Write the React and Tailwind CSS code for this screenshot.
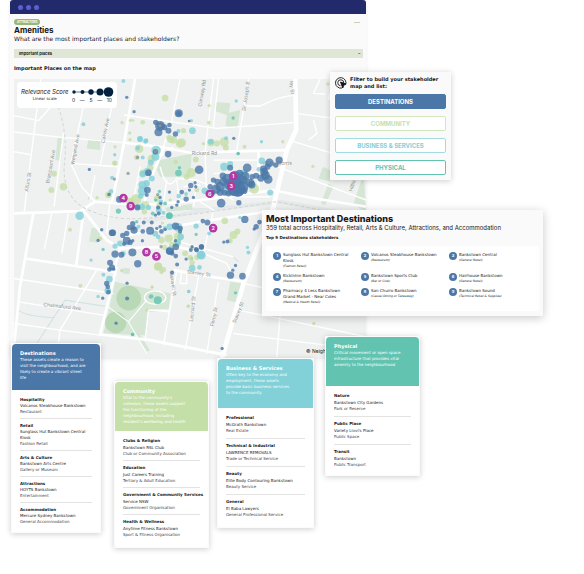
import React from 'react';

const BLUE = '#4a77a8';
const GREEN = '#c5dfa8';
const AQUA = '#82d0d8';
const TEAL = '#62c3b1';
const GREY = '#8d9399';

// Each group is a list of [x, y, radius] in map units, offset by (dx, dy).
const dotGroups = [
  { dx: 0, dy: 0, color: GREEN, dots: [[495, 294, 10], [391, 361, 5], [399, 361, 4], [428, 367, 7], [366, 368, 5], [389, 399, 5], [390, 419, 5], [344, 489, 8], [162, 521, 9], [190, 560, 11], [154, 570, 9], [550, 392, 8], [512, 418, 11], [540, 430, 13], [627, 317, 5], [626, 368, 6], [610, 431, 5], [733, 440, 6], [848, 425, 5], [983, 252, 5], [938, 499, 5]] },
  { dx: 0, dy: 0, color: AQUA, dots: [[370, 243, 6], [250, 373, 6], [344, 464, 5], [336, 533, 6], [708, 303, 5], [784, 425, 5], [535, 393, 6], [577, 392, 10], [574, 362, 5], [420, 417, 8], [436, 424, 7]] },
  { dx: 0, dy: 0, color: BLUE, dots: [[380, 292, 5], [402, 335, 5], [268, 508, 5], [701, 415, 5], [326, 584, 6], [567, 363, 4]] },
  { dx: 0, dy: 0, color: TEAL, dots: [[699, 354, 5], [714, 461, 5]] },
  { dx: 0, dy: 540, color: GREEN, dots: [[210, 149, 6], [300, 176, 7], [241, 317, 6], [325, 44, 10], [291, 53, 5], [365, 271, 5], [440, 390, 5], [456, 321, 5], [474, 259, 12], [484, 275, 7], [565, 378, 5]] },
  { dx: 0, dy: 540, color: AQUA, dots: [[239, 107, 13], [333, 34, 7], [273, 240, 5], [310, 284, 6], [328, 297, 10], [294, 349, 5], [323, 332, 10], [566, 334, 5]] },
  { dx: 0, dy: 540, color: BLUE, dots: [[305, 149, 5], [336, 158, 10], [294, 181, 5], [327, 43, 5], [330, 248, 9], [336, 262, 9], [328, 268, 7], [341, 267, 5], [320, 310, 8], [323, 320, 7], [325, 336, 7], [308, 354, 5], [413, 251, 11], [381, 309, 5], [381, 355, 6], [348, 429, 5], [516, 277, 6], [531, 253, 6]] },
  { dx: 0, dy: 540, color: TEAL, dots: [[355, 93, 8], [309, 208, 5], [453, 349, 7], [473, 360, 12], [397, 463, 5], [508, 107, 10]] },
  { dx: 390, dy: 510, color: GREEN, dots: [[284, 152, 10], [322, 184, 9], [310, 195, 12], [300, 212, 8], [84, 289, 12], [100, 298, 8], [165, 250, 9], [184, 235, 7], [200, 262, 8], [186, 278, 8], [174, 408, 5], [66, 350, 4], [551, 460, 5]] },
  { dx: 390, dy: 510, color: AQUA, dots: [[214, 255, 13], [186, 294, 10], [208, 292, 7], [329, 142, 5], [355, 247, 6], [352, 232, 5], [176, 364, 5], [198, 168, 8], [237, 190, 6]] },
  { dx: 390, dy: 510, color: BLUE, dots: [[273, 99, 13], [326, 98, 8], [344, 148, 11], [388, 156, 7], [378, 170, 8], [372, 177, 5], [281, 216, 5], [292, 214, 6], [214, 231, 8], [200, 240, 7], [186, 230, 5], [301, 315, 11], [337, 318, 10], [316, 286, 5], [308, 300, 5], [276, 535, 5], [120, 242, 12], [137, 258, 7], [218, 153, 7], [232, 157, 9]] },
  { dx: 390, dy: 510, color: TEAL, dots: [[118, 136, 9], [316, 368, 5], [184, 265, 5], [8, 493, 5]] },
  { dx: 330, dy: 270, color: GREEN, dots: [[87, 176, 13], [125, 206, 12], [80, 202, 8], [98, 248, 10], [120, 233, 10], [78, 328, 16], [60, 335, 12], [105, 345, 12], [103, 365, 8], [257, 208, 9], [243, 248, 14], [230, 260, 9], [197, 216, 7], [190, 150, 11], [176, 142, 8], [215, 158, 13], [302, 158, 11], [320, 160, 9], [342, 156, 14], [347, 172, 9], [140, 325, 9], [148, 345, 9], [176, 445, 12], [154, 450, 10], [205, 440, 14], [200, 460, 11], [186, 465, 9], [164, 472, 8], [15, 170, 5], [14, 219, 6], [260, 300, 7], [432, 296, 15], [420, 280, 10], [240, 503, 8], [180, 330, 5], [157, 399, 5]] },
  { dx: 330, dy: 270, color: AQUA, dots: [[90, 147, 9], [83, 174, 7], [108, 152, 7], [138, 181, 14], [136, 200, 12], [122, 217, 9], [98, 202, 6], [98, 252, 10], [112, 246, 12], [125, 265, 9], [110, 280, 10], [97, 285, 12], [97, 303, 14], [92, 318, 8], [83, 350, 8], [95, 350, 10], [115, 352, 8], [152, 335, 7], [146, 360, 9], [160, 368, 6], [206, 318, 7], [228, 312, 6], [284, 302, 10], [348, 145, 6], [302, 155, 9], [342, 230, 12], [360, 222, 9], [400, 250, 12], [391, 293, 18], [350, 300, 14], [455, 212, 10], [480, 307, 9], [446, 238, 7], [204, 412, 13], [212, 440, 10], [179, 410, 10], [165, 415, 7], [135, 430, 9], [85, 410, 6], [30, 460, 9], [15, 468, 8], [40, 490, 7], [204, 456, 9], [272, 495, 12], [180, 475, 7], [144, 440, 7]] },
  { dx: 330, dy: 270, color: BLUE, dots: [[206, 70, 12], [206, 71, 8], [137, 97, 8], [150, 108, 15], [150, 107, 9], [145, 127, 12], [175, 122, 9], [196, 132, 8], [178, 105, 7], [163, 112, 9], [136, 185, 8], [174, 192, 10], [267, 239, 13], [115, 248, 10], [112, 300, 10], [110, 315, 6], [28, 328, 10], [82, 352, 9], [152, 340, 5], [144, 352, 6], [146, 370, 6], [150, 322, 5], [178, 306, 5], [215, 306, 7], [204, 335, 5], [228, 327, 8], [242, 286, 8], [257, 290, 5], [250, 322, 5], [238, 300, 5], [255, 278, 5], [185, 352, 5], [200, 345, 5], [196, 408, 11], [210, 415, 8], [210, 425, 6], [68, 401, 8], [58, 412, 8], [72, 420, 11], [70, 414, 7], [101, 397, 6], [120, 422, 12], [98, 424, 7], [50, 430, 8], [38, 436, 8], [50, 452, 12], [60, 457, 8], [42, 462, 6], [8, 428, 10], [15, 492, 11], [34, 494, 9], [67, 487, 12], [68, 452, 5], [97, 452, 5], [154, 424, 7], [165, 418, 5], [150, 410, 5], [140, 415, 5], [178, 483, 11], [197, 470, 10], [186, 490, 7], [242, 480, 6], [258, 478, 7], [274, 470, 8], [228, 507, 5], [196, 452, 5], [125, 397, 6], [136, 375, 5]] },
  { dx: 330, dy: 270, color: BLUE, dots: [[310, 270, 8], [318, 297, 14], [306, 308, 9], [330, 290, 14], [340, 275, 13], [338, 257, 10], [330, 307, 10], [352, 266, 15], [360, 283, 18], [374, 276, 20], [380, 295, 25], [395, 290, 20], [385, 303, 17], [370, 300, 18], [400, 270, 12], [388, 250, 11], [411, 233, 13], [360, 233, 9], [404, 258, 14], [420, 278, 13], [425, 284, 11], [438, 257, 9], [452, 264, 11], [466, 256, 13], [474, 268, 13], [460, 236, 10], [478, 218, 13], [472, 230, 9], [497, 225, 8], [507, 210, 11], [462, 246, 12], [375, 258, 16], [402, 302, 10], [355, 310, 9], [343, 308, 9], [380, 270, 14], [426, 260, 8], [300, 290, 8], [322, 275, 9]] },
  { dx: 330, dy: 270, color: TEAL, dots: [[205, 249, 10], [148, 304, 5], [208, 233, 5], [384, 190, 5], [165, 340, 6], [137, 330, 5], [177, 377, 9], [128, 370, 6], [258, 433, 5], [80, 395, 5]] },
  { dx: 330, dy: 270, color: GREY, dots: [[82, 202, 5], [54, 250, 5], [13, 267, 5], [136, 184, 6], [150, 107, 5], [143, 314, 5], [153, 470, 5]] },
];

const pins = [[699, 528, 1], [639, 684, 2], [693, 558, 3], [370, 594, 4], [469, 769, 5], [629, 581, 6], [439, 756, 8], [392, 618, 9]];

const minorRoads = [
  'M42 347L115 362L160 312M42 396L185 412L372 428M42 455L92 464M122 237L72 640M190 400L162 620M250 320L212 490L355 500M335 320L300 500',
  'M372 345L650 385L880 368M540 237L515 360L490 440M640 237L615 455L620 600M745 237L710 450M655 237L640 380M730 318L780 318Q840 288 880 286',
  'M888 340L1098 368M880 425L1098 490M830 500L1098 600M960 237L940 280L975 282M1000 237L985 300M940 360L950 400L925 420',
  'M100 640L75 775M155 640L133 748M205 640L185 760M42 835L340 880M55 905L310 945M42 970L180 990L300 1005M290 810L180 990L170 1071',
  'M285 605L245 560L212 490M285 525L270 600M530 810L490 1035M595 830L555 1050M655 845L620 1060M520 720L700 770M600 605L640 630L610 760L680 790L700 830',
  'M730 850L1098 930M715 930L1098 1010M700 1000L1098 1050M840 940L830 1071M440 930L510 930M435 1020L445 930L510 935M545 810L540 850L560 850L560 815',
  'M480 500Q500 580 530 535L590 540Q640 560 700 600M500 540L490 610M530 540L540 620M590 540L580 620M420 500L400 600M330 600L320 700M480 470L520 440M550 560L600 555M640 480L820 480M640 520L800 515M650 590L810 590',
];

const streets = [
  [84, 575, -80, 'Allum St'], [148, 550, -80, 'Brancourt Ave'], [222, 495, -80, 'Weigand Ave'], [313, 430, -78, 'Cairds Ave'],
  [604, 320, -80, 'Conway Rd'], [736, 334, -82, 'Sir Joseph B'], [868, 244, 84, 'ley St'], [575, 464, 0, 'Rickard Rd'],
  [786, 496, 0, 'Vicky Morris'], [130, 918, 6, 'Chelmsford Ave'], [508, 812, 82, 'Maxwell St'], [560, 820, 8, 'Stanley St'],
  [578, 965, -84, 'Leonard St'], [640, 980, -78, 'Percy St'], [706, 970, -68, 'Stacey St'], [1056, 575, -72, 'Hillier St'],
];

function AmenityMap() {
  return (
    <svg viewBox="42 237 1056 840" preserveAspectRatio="xMidYMin slice" className="block h-[280px] w-full" role="img" aria-label="Map of important places">
      <rect x="0" y="200" width="1200" height="900" fill="#eff1f1" />
      <g fill="#d5e6d5">
        <path d="M173 413L187 415L183 483L166 480Z" />
        <path d="M265 417L301 420L300 450L260 445Z" />
        <path d="M648 306L691 310L686 338L720 330L712 384L676 378L680 345L645 333Z" />
        <path d="M480 480L575 460L570 530L480 530L470 510Z" />
        <path d="M345 845L512 880L505 935L445 935L435 1005L310 1000Z" />
        <path d="M275 683L305 688L293 728L267 724Z" />
        <path d="M370 803L390 805L388 822L368 820Z" />
        <path d="M690 845L730 850L722 910L680 900Z" />
        <path d="M968 500L1000 515L990 545L955 535Z" />
        <path d="M1090 520L1060 610L1098 640Z" />
        <path d="M985 550L962 610L975 615L1000 560Z" />
        <path d="M268 585L262 600L274 600Z" />
        <path d="M495 623L575 612L578 628L500 635Z" />
        <path d="M385 965L440 1055L450 1050L395 965Z" />
      </g>
      <g fill="#b9d9b6">
        <circle cx="386" cy="894" r="37" />
        <circle cx="347" cy="967" r="32" />
      </g>
      <g fill="none" stroke="#cfe2e2" strokeWidth="3">
        <path d="M55 930Q80 950 160 952M110 1030L195 900L315 918M560 628L700 622M700 770L715 785" />
      </g>
      <g fill="none" stroke="#e6e9e9" strokeWidth="12">
        <path d="M430 665L620 630L840 605L1098 650" />
      </g>
      <g fill="none" stroke="#fff" strokeWidth="4" strokeLinejoin="round">
        {minorRoads.map((d) => <path key={d} d={d} />)}
        <ellipse cx="465" cy="892" rx="32" ry="20" />
        <path d="M325 920L385 965L440 1060M385 965L440 900" strokeWidth="3" />
      </g>
      <g fill="none" stroke="#fff" strokeWidth="8" strokeLinejoin="round">
        <path d="M405 237L372 428L335 612" />
        <path d="M372 428L480 440L570 458L860 450" />
        <path d="M42 640L240 633L285 605L430 615L600 600L820 570" />
        <path d="M250 630L320 720L360 745L530 740L600 755" />
        <path d="M100 640L75 775L60 860L42 1040M75 775L340 815L360 745M250 640L228 800" />
        <path d="M350 800L300 1003L450 1020L680 1065" />
        <path d="M490 445L450 540L430 620" />
        <path d="M520 810L600 825L735 845M775 450L775 580" />
        <path d="M360 710L600 665L830 630" />
        <path d="M820 570Q900 590 1098 620" />
      </g>
      <path d="M885 237L888 390L860 450L820 620L730 850L665 1075" fill="none" stroke="#fff" strokeWidth="14" strokeLinejoin="round" />
      <path d="M175 320Q205 410 192 500Q190 590 255 625Q330 662 430 655L600 640L830 605L1098 655" fill="none" stroke="#d3d6d6" strokeWidth="3" strokeDasharray="10 7" />
      <g fill="#8f9494" fontFamily="Inter, sans-serif" fontSize="15">
        {streets.map(([x, y, a, t]) => (
          <text key={t} x={x} y={y} transform={`rotate(${a} ${x} ${y})`}>{t}</text>
        ))}
      </g>
      {dotGroups.map((g, i) => (
        <g key={i} fill={g.color} fillOpacity="0.8" transform={`translate(${g.dx} ${g.dy})`}>
          {g.dots.map(([x, y, r], k) => <circle key={k} cx={x} cy={y} r={r} />)}
        </g>
      ))}
      <g fontFamily="Inter, sans-serif" fontSize="16" fontWeight="600" textAnchor="middle">
        {pins.map(([x, y, n], i) => (
          <g key={i}>
            <circle cx={x} cy={y} r="13" fill="#b239a5" />
            <text x={x} y={y + 6} fill="#fff">{n}</text>
          </g>
        ))}
      </g>
    </svg>
  );
}

function Legend() {
  return (
    <div className="absolute top-[3px] left-[3px] flex h-[26px] w-[100px] items-center justify-between rounded-[4px] bg-white pr-[3px] pl-1">
      <div className="text-center">
        <p className="text-[6px] leading-[8px] whitespace-nowrap italic">Relevance Score</p>
        <p className="font-[family-name:'DejaVu_Sans',sans-serif] text-[4px] leading-[6px]">Linear scale</p>
      </div>
      <div className="w-[42px]">
        <svg viewBox="0 0 42 10" className="block h-[10px] w-full" aria-hidden="true">
          <path d="M2 5H38" stroke="#04213f" strokeWidth="0.6" />
          <g fill="#04213f">
            <circle cx="2" cy="5" r="1.7" />
            <circle cx="10.500" cy="5" r="2" />
            <circle cx="19" cy="5" r="2.700" />
            <circle cx="28" cy="5" r="3.500" />
            <circle cx="36.500" cy="5" r="4.800" />
          </g>
        </svg>
        <p className="flex justify-between pr-[2px] text-[5px] leading-[7px]">
          <span>0</span><span>—</span><span>5</span><span>—</span><span>10</span>
        </p>
      </div>
    </div>
  );
}

function TargetIcon() {
  return (
    <svg viewBox="0 0 24 24" className="h-[12px] w-[12px] shrink-0" fill="none" stroke="#111" strokeWidth="1.8" aria-hidden="true">
      <path d="M21.500 15A10.500 10.500 0 1 0 14 22" />
      <path d="M17.500 12A6 6 0 1 0 11 17.500" />
      <path d="M11 10L22 14L17.500 16.500L15.500 22Z" fill="#111" />
    </svg>
  );
}

const filters = [
  ['DESTINATIONS', 'border-[#4a77a8] bg-[#4a77a8] text-white'],
  ['COMMUNITY', 'border-[#d3e7bd] bg-white text-[#c5dfa8]'],
  ['BUSINESS & SERVICES', 'border-[#a3dbe2] bg-white text-[#82d0d8]'],
  ['PHYSICAL', 'border-[#62c3b1] bg-white text-[#62c3b1]'],
];

function FilterPanel() {
  return (
    <section className="absolute top-[72px] left-[330px] w-[121px] bg-[#fafafa] px-[5px] pt-[4px] pb-[5px] shadow-[0_1px_6px_rgba(0,0,0,0.2)]">
      <div className="mb-[4px] flex items-center gap-[3px]">
        <TargetIcon />
        <h2 className="font-[family-name:'DejaVu_Sans',sans-serif] text-[5px] leading-[7px] font-bold whitespace-nowrap">Filter to build your stakeholder<br />map and list:</h2>
      </div>
      <div className="flex flex-col gap-[7px]">
        {filters.map(([name, tone]) => (
          <button key={name} type="button" className={`h-[15px] rounded-[2px] border text-[6px] leading-[8px] font-bold ${tone}`}>{name}</button>
        ))}
      </div>
    </section>
  );
}

const stakeholders = [
  ['Sunglass Hut Bankstown Central\nKiosk', 'Fashion Retail'],
  ['Volcanos Steakhouse Bankstown', 'Restaurant'],
  ['Bankstown Central', 'General Retail'],
  ['KickInInn Bankstown', 'Restaurant'],
  ['Bankstown Sports Club', 'Bar or Club'],
  ['Hairhouse Bankstown', 'General Retail'],
  ['Pharmacy 4 Less Bankstown\nGrand Market - Near Coles', 'Medical & Health Retail'],
  ['San Churro Bankstown', 'Casual Dining or Takeaway'],
  ['Bankstown Sound', 'Technical Retail & Supplies'],
];

function ImportantPanel() {
  return (
    <section className="absolute top-[210px] left-[262px] w-[281px] bg-[#fafafa] px-1 pt-[3px] pb-[5px] shadow-[0_2px_9px_rgba(0,0,0,0.22)]">
      <h2 className="text-[9px] leading-[11px] font-extrabold">Most Important Destinations</h2>
      <p className="text-[6px] leading-[8px] whitespace-nowrap">359 total across Hospitality, Retail, Arts &amp; Culture, Attractions, and Accommodation</p>
      <h3 className="mt-[3px] font-[family-name:'DejaVu_Sans',sans-serif] text-[4px] leading-[6px] font-bold">Top 9 Destinations stakeholders</h3>
      <ol className="mt-[5px] grid grid-cols-3 gap-y-[4px] rounded-[3px] bg-white pt-[6px] pr-[2px] pb-[6px] pl-[7px]">
        {stakeholders.map(([name, kind], i) => (
          <li key={name} className="flex items-start gap-[2px]">
            <span className="flex h-[8px] w-[8px] shrink-0 items-center justify-center rounded-full bg-[#4a77a8] text-[4px] leading-[8px] font-bold text-white">{i + 1}</span>
            <div className="font-[family-name:'DejaVu_Sans',sans-serif] whitespace-pre">
              <p className="text-[4px] leading-[6px]">{name}</p>
              <p className="text-[3px] leading-[5px] italic">({kind})</p>
            </div>
          </li>
        ))}
      </ol>
    </section>
  );
}

const cards = [
  {
    title: 'Destinations', place: 'mt-[7px] w-[90px]', head: 'h-[46px] bg-[#4a77a8]', foot: 'pb-[4px]', row: 'pb-[3px]', name: 'leading-[6px]',
    text: 'These assets create a reason to\nvisit the neighbourhood, and are\nlikely to create a vibrant street\nlife',
    items: [['Hospitality', 'Volcanos Steakhouse Bankstown', 'Restaurant'], ['Retail', 'Sunglass Hut Bankstown Central\nKiosk', 'Fashion Retail'], ['Arts & Culture', 'Bankstown Arts Centre', 'Gallery or Museum'], ['Attractions', 'HOYTS Bankstown', 'Entertainment'], ['Accommodation', 'Mercure Sydney Bankstown', 'General Accommodation']],
  },
  {
    title: 'Community', place: 'mt-[45px] ml-[13px] w-[95px]', head: 'h-[49px] bg-[#c5dfa8]', foot: 'pb-[6px]', row: 'pb-[3px]', name: 'leading-[7px]',
    text: "Vital to the community's\ncohesion, these assets support\nthe functioning of the\nneighbourhood, including\nresident's wellbeing and health",
    items: [['Clubs & Religion', 'Bankstown RSL Club', 'Club or Community Association'], ['Education', 'Just Careers Training', 'Tertiary & Adult Education'], ['Government & Community Services', 'Service NSW', 'Government Organisation'], ['Health & Wellness', 'Anytime Fitness Bankstown', 'Sport & Fitness Organisation']],
  },
  {
    title: 'Business & Services', place: 'mt-[22px] ml-[8px] w-[97px]', head: 'h-[49px] bg-[#82d0d8]', foot: 'pb-[5px]', row: 'pb-[4px]', name: 'leading-[7px]',
    text: 'Often key to the economy and\nemployment, these assets\nprovide basic business services\nto the community',
    items: [['Professional', 'McGrath Bankstown', 'Real Estate'], ['Technical & Industrial', 'LAWRENCE REMOVALS', 'Trade or Technical Service'], ['Beauty', 'Elite Body Contouring Bankstown', 'Beauty Service'], ['General', 'El Baba Lawyers', 'General Professional Service']],
  },
  {
    title: 'Physical', place: 'ml-[11px] w-[95px]', head: 'h-[49px] bg-[#62c3b1]', foot: 'pb-[3px]', row: 'pb-[4px]', name: 'leading-[7px]',
    text: 'Critical movement or open space\ninfrastructure that provides vital\namenity to the neighbourhood',
    items: [['Nature', 'Bankstown City Gardens', 'Park or Reserve'], ['Public Place', "Variety Livvi's Place", 'Public Space'], ['Transit', 'Bankstown', 'Public Transport']],
  },
];

function CategoryCard({ card }) {
  return (
    <article className={`shrink-0 bg-[#fbfbfb] p-px shadow-[0_1px_6px_rgba(0,0,0,0.2)] ${card.place}`}>
      <div className="rounded-[4px] bg-white font-[family-name:'DejaVu_Sans',sans-serif]">
        <header className={`rounded-t-[4px] px-2 pt-[6px] whitespace-pre text-white ${card.head}`}>
          <h2 className="text-[5px] leading-[7px] font-bold">{card.title}</h2>
          <p className="text-[4px] leading-[6px]">{card.text}</p>
        </header>
        <ul className={`px-2 pt-[3px] whitespace-pre ${card.foot}`}>
          {card.items.map(([label, name, kind]) => (
            <li key={label} className={`border-b border-[#e3e3e3] pt-[4px] text-[4px] last:border-b-0 ${card.row}`}>
              <h3 className="leading-[6px] font-bold">{label}</h3>
              <p className={card.name}>{name}</p>
              <p className="leading-[6px] text-[#444]">{kind}</p>
            </li>
          ))}
        </ul>
      </div>
    </article>
  );
}

export default function App() {
  return (
    <main className="relative min-h-screen overflow-hidden bg-white font-[family-name:Inter,'Liberation_Sans',sans-serif] text-[#181818]">
      <section className="ml-[10px] w-[61%] overflow-hidden rounded-t-[3px] bg-[#fafafa] shadow-[0_0_4px_rgba(0,0,0,0.08)]">
        <div className="flex h-[14px] items-center gap-[3px] bg-[#232a6c] pl-[8px]">
          <span className="h-[5px] w-[5px] rounded-full bg-[#5a60d2]" />
          <span className="h-[5px] w-[5px] rounded-full bg-[#5a60d2]" />
          <span className="h-[5px] w-[5px] rounded-full bg-[#5a60d2]" />
        </div>
        <div className="pl-1">
          <header className="pt-[5px] pr-[3px]">
            <div className="flex items-center justify-between pr-[3px]">
              <span className="rounded-full bg-[#97b77c] px-[3px] text-[3px] leading-[6px] font-bold text-white">ATTRACTORS</span>
              <span className="h-px w-[6px] bg-[#c4d3b4]" />
            </div>
            <h1 className="text-[8px] leading-[10px] font-bold">Amenities</h1>
            <p className="font-[family-name:'DejaVu_Sans',sans-serif] text-[6px] leading-[7px]">What are the most important places and stakeholders?</p>
            <button type="button" className="mt-[7px] flex h-[9px] w-full items-center justify-between bg-[#dfe6d6] pr-[3px] pl-[5px] text-[4px] leading-[6px] font-bold">
              <span>Important places</span>
              <span>–</span>
            </button>
            <h2 className="py-[7px] font-[family-name:'DejaVu_Sans',sans-serif] text-[5px] leading-[7px] font-bold">Important Places on the map</h2>
          </header>
          <div className="relative">
            <AmenityMap />
            <Legend />
            <p className="absolute right-0 bottom-[4px] left-0 pl-[292px] text-[5px] leading-[7px]">© Neigh</p>
          </div>
        </div>
      </section>
      <FilterPanel />
      <ImportantPanel />
      <div className="relative -mt-[23px] ml-[11px] flex items-start pb-6">
        {cards.map((card) => <CategoryCard key={card.title} card={card} />)}
      </div>
    </main>
  );
}
